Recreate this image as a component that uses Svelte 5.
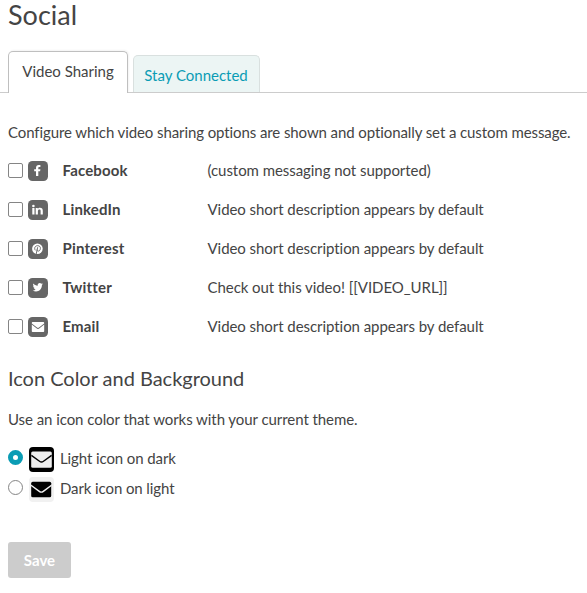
<script>
  const tabs = ['Video Sharing', 'Stay Connected'];
  let active = $state(0);
  let theme = $state('light');
  const options = [
    { name: 'Facebook', icon: 'facebook', text: '(custom messaging not supported)' },
    { name: 'LinkedIn', icon: 'linkedin', text: 'Video short description appears by default' },
    { name: 'Pinterest', icon: 'pinterest', text: 'Video short description appears by default' },
    { name: 'Twitter', icon: 'twitter', text: 'Check out this video! [[VIDEO_URL]]' },
    { name: 'Email', icon: 'email', text: 'Video short description appears by default' }
  ];
</script>

{#snippet glyph(kind)}
  <svg class="icon" viewBox="0 0 20 20" aria-hidden="true">
    <rect width="20" height="20" rx="4.5" fill="#666" />
    {#if kind === 'facebook'}
      <path fill="#fff" d="M8 15V10.3H6.2V8.3H8V6.9c0-1.9 1-2.9 2.8-2.9h1.6v2h-1c-.8 0-1.1.3-1.1.9v1.4h2.1l-.3 2h-1.8V15z" />
    {:else if kind === 'linkedin'}
      <circle cx="5.4" cy="6" r="1.3" fill="#fff" />
      <path fill="#fff" d="M4.3 8h2.2v6.5H4.3zM7.7 8h2.1v.9c.4-.7 1.1-1.1 2.2-1.1 2 0 2.8 1.1 2.8 3v3.7h-2.2V11c0-.9-.3-1.4-1.2-1.4s-1.5.6-1.5 1.6v3.3H7.7z" />
    {:else if kind === 'pinterest'}
      <circle cx="9.4" cy="9.8" r="5.3" fill="#fff" />
      <path fill="none" stroke="#666" stroke-width=".95" stroke-linecap="round" d="M7.1 11C5.9 9 7.1 6.7 9.6 6.7c2 0 3 1.3 2.8 2.8-.2 1.6-1 2.6-2.1 2.6-.8 0-1.3-.5-1.2-1.2M9.6 8.6l-1.3 6" />
    {:else if kind === 'twitter'}
      <path fill="#fff" d="M14.9 6.2c-.4.2-.8.3-1.2.3.4-.3.8-.7.9-1.2-.4.3-.9.4-1.3.5a2.1 2.1 0 0 0-3.6 1.9c-1.8-.1-3.3-.9-4.3-2.2-.6 1-.3 2.2.6 2.8-.3 0-.7-.1-.9-.3 0 1 .7 1.9 1.6 2.1-.3.1-.6.1-.9 0 .3.9 1.1 1.5 2 1.5-.9.7-2 1-3.1.9 4.4 2.7 9.2-.4 9.2-5.2.4-.3.8-.7 1-1.1z" />
    {:else}
      <path fill="#fff" d="M4.6 5.1h10.8q.8 0 .8.8v.7L11 10.6q-1 .8-2 0L3.8 6.6v-.7q0-.8.8-.8z" />
      <path fill="#fff" d="M3.8 7.6l4.7 3.7q1.5 1.2 3 0l4.7-3.7v6.6q0 .8-.8.8H4.6q-.8 0-.8-.8z" />
    {/if}
  </svg>
{/snippet}

{#snippet envelope(bg, fg)}
  <svg class="envelope" viewBox="0 0 25 25" aria-hidden="true">
    <rect width="25" height="25" rx="4" fill={bg} />
    {#if bg === '#000'}
      <rect x="2.2" y="4.5" width="20.6" height="16.3" rx="1.5" fill={fg} />
      <path d="M2.4 8.4l8.1 5.8q2 1.5 4 0l8.1-5.8" fill="none" stroke={bg} stroke-width="1.4" />
    {:else}
      <rect x="2.2" y="4.7" width="20" height="15.6" rx="1.5" fill={fg} />
      <path d="M2 8.2l8.3 6.2q2 1.5 4 0l8.2-6.2" fill="none" stroke={bg} stroke-width="1.4" />
    {/if}
  </svg>
{/snippet}

<main>
  <h1>Social</h1>
  <nav>
    {#each tabs as tab, i}
      <button class="tab" class:active={active === i} onclick={() => (active = i)}>{tab}</button>
    {/each}
  </nav>

  <section>
    <p class="intro">Configure which video sharing options are shown and optionally set a custom message.</p>
    {#each options as option}
      <div class="row">
        <input type="checkbox" aria-label={option.name} />
        {@render glyph(option.icon)}
        <strong>{option.name}</strong>
        <span>{option.text}</span>
      </div>
    {/each}

    <h2>Icon Color and Background</h2>
    <p class="hint">Use an icon color that works with your current theme.</p>
    <label>
      <input type="radio" name="theme" value="light" bind:group={theme} />
      {@render envelope('#000', '#eee')}
      <span>Light icon on dark</span>
    </label>
    <label>
      <input type="radio" name="theme" value="dark" bind:group={theme} />
      {@render envelope('#f1f1f1', '#000')}
      <span>Dark icon on light</span>
    </label>
    <button class="save">Save</button>
  </section>
</main>

<style>
  :global(body) { background: #fff; }
  main {
    height: 593px;
    color: #444;
    font: 15px/20px Lato, sans-serif;
    font-variant-ligatures: none;
  }
  h1 {
    margin: 0;
    padding-left: 8px;
    height: 51px;
    font-size: 27px;
    font-weight: 400;
    line-height: 29px;
  }
  nav {
    display: flex;
    align-items: flex-end;
    gap: 5px;
    height: 41px;
    padding-left: 8px;
    border-bottom: 1px solid #ccc;
  }
  .tab {
    box-sizing: border-box;
    width: 127px;
    height: 37px;
    padding: 1px 1px 0 0;
    border: 1px solid #d9e0df;
    border-bottom: 0;
    border-radius: 5px 5px 0 0;
    background: #ecf5f4;
    color: #0a9cb4;
    font: inherit;
    white-space: nowrap;
  }
  .tab.active {
    width: 120px;
    height: 42px;
    padding: 0 0 4px;
    margin-bottom: -1px;
    border-color: #bfbfbf;
    background: #fff;
    color: #444;
    box-shadow: 1px -1px 2px #0000000d;
  }
  section { padding: 29px 8px 0; }
  p { margin: 0; white-space: nowrap; }
  .intro { margin-bottom: 9px; letter-spacing: -0.092px; }
  .row {
    display: flex;
    align-items: center;
    height: 39px;
  }
  .row span { letter-spacing: -0.055px; }
  .row strong, .row span, label span { padding-bottom: 2px; }
  input {
    appearance: none;
    box-sizing: border-box;
    flex: none;
    width: 15px;
    height: 15px;
    margin: 0 5px 0 0;
    border: 1px solid #858585;
    border-radius: 2px;
    background: #fff;
  }
  .icon { flex: none; width: 20px; height: 20px; }
  strong { width: 145px; margin-left: 14.5px; letter-spacing: 0.16px; }
  h2 {
    margin: 18px 0 17px;
    font-size: 20px;
    font-weight: 400;
    line-height: 28px;
    letter-spacing: -0.02px;
  }
  .hint { margin-bottom: 15px; letter-spacing: -0.06px; }
  label { display: flex; align-items: center; height: 30px; }
  label span { letter-spacing: -0.1px; }
  label input { margin: -3px 6px 0 0; border-radius: 50%; }
  label input:checked { border: 5px solid #0a9cb4; }
  .envelope { flex: none; width: 25px; height: 25px; margin-right: 6px; }
  .save {
    display: block;
    width: 63px;
    height: 36px;
    margin-top: 38px;
    padding: 0;
    border: 0;
    border-radius: 3px;
    background: #ccc;
    color: #fff;
    font: 700 15px/20px Lato, sans-serif;
  }
</style>
